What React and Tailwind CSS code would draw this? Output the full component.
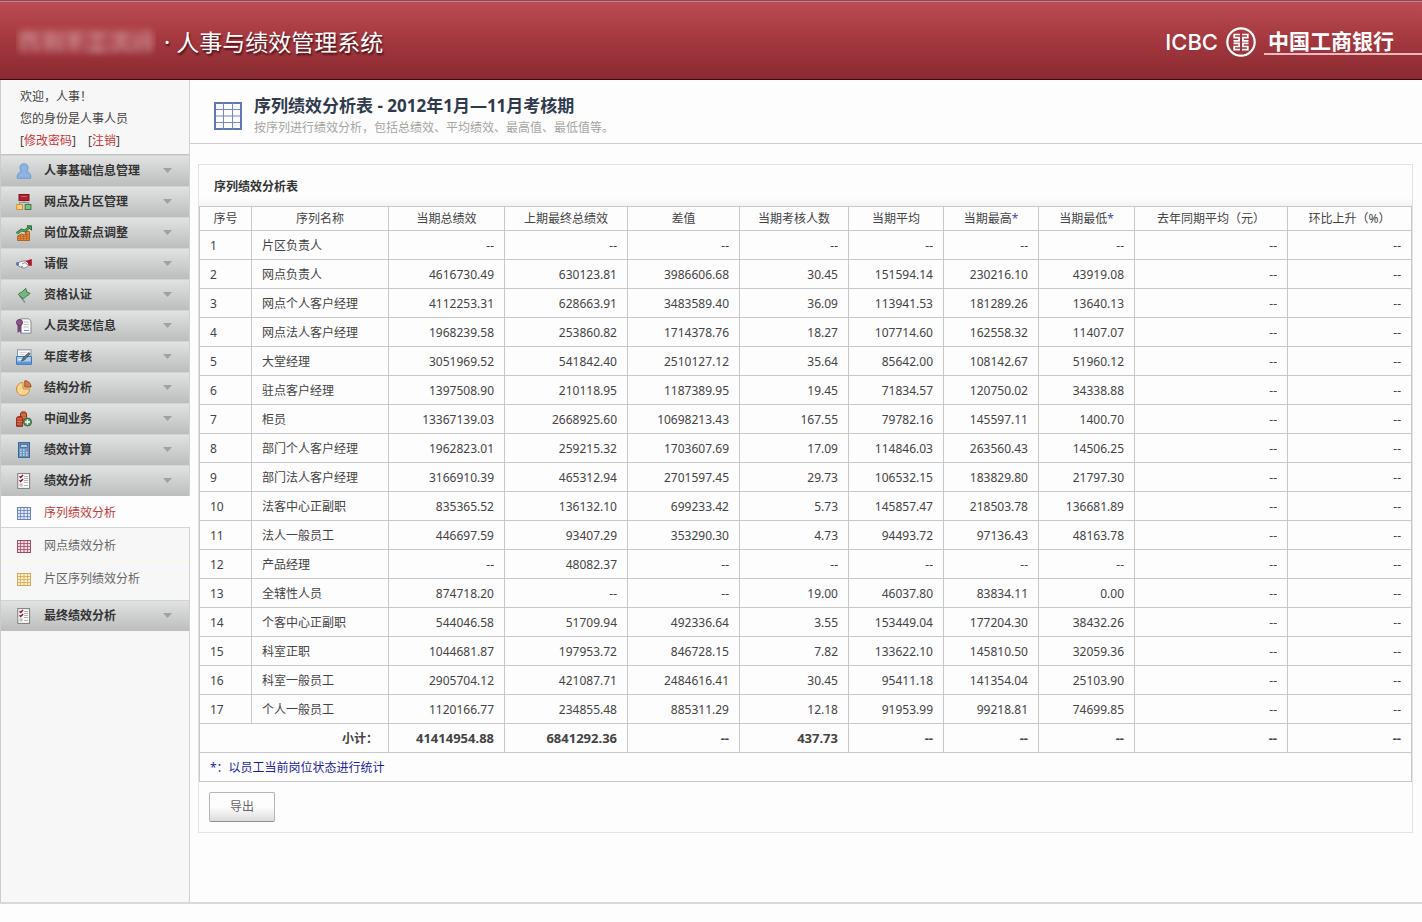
import React from "react";

const svg = { width: 16, height: 16, viewBox: "0 0 16 16", "aria-hidden": true, fill: "none" };

const UserIcon = () => (
  <svg {...svg}>
    <path d="M8 .8c2.400 0 4 1.600 4 3.800 0 1.700-.7 3-1.500 3.900 3 .8 4.300 2.600 4.300 6.700H1.200c0-4.100 1.300-5.900 4.300-6.700C4.700 7.600 4 6.300 4 4.600 4 2.400 5.600.8 8 .8Z" fill="#8fb4e3" stroke="#6d97d0" />
  </svg>
);
const BranchIcon = () => (
  <svg {...svg}>
    <path d="M8 7v2M3.500 11V8.500h9V11" stroke="#8b8b8b" />
    <rect x="3" y=".5" width="10" height="6" fill="#b0202c" stroke="#7c1620" />
    <path d="M5 2.500h6" stroke="#d25a62" />
    <rect x=".8" y="10.500" width="5.700" height="5" fill="#f5cf7b" stroke="#d09338" />
    <rect x="9.200" y="10.500" width="5.700" height="5" fill="#7fc08a" stroke="#3e7a4a" />
  </svg>
);
const GrowthIcon = () => (
  <svg {...svg}>
    <path d="M1.500 15.500V11l4-2 4 1V6.500h4v9z" fill="#e58a3c" stroke="#b8621f" />
    <path d="M2 13.500h11M2 11.500h11M9.500 9.500h4M4.500 10v5.500M7.500 10v5.500M10.500 7v8.500" stroke="#b8621f" strokeWidth=".7" />
    <path d="M.8 8.500 5.500 5 9 6l4-3.500" stroke="#2f6b3b" strokeWidth="2.800" />
    <path d="M.8 8.500 5.500 5 9 6l4-3.500" stroke="#5fa96c" strokeWidth="1.100" />
    <path d="M11 .8h4.500v4.500z" fill="#4f9a5d" stroke="#2f6b3b" />
  </svg>
);
const HandshakeIcon = () => (
  <svg {...svg}>
    <path d="M.2 6.500 3 6v4.500L.2 9z" fill="#3d6fc0" />
    <path d="M2.500 6.500 6 5.200l4-.4 3 1.200-.5 4L9 12H6.500L2.500 10z" fill="#f4f4f4" stroke="#777" strokeWidth=".8" />
    <path d="m6 8 3-1.500 3.500 3M5 10l2 1" stroke="#777" strokeWidth=".8" />
    <path d="M9.500 5 15.800 3v7l-3-.5-1-2.500z" fill="#a8182a" />
  </svg>
);
const FlagIcon = () => (
  <svg {...svg}>
    <path d="M3.500 8.500 9 15.500" stroke="#8a8a8a" strokeWidth="1.400" />
    <path d="M2.300 7.500c1-2 3.200-1.700 4.400-3.200C7.900 3 8.700 2.500 9.700 1.300l1 3.700 3.300 1.300c-1 2-2.700 1.900-3.800 3.100-1 1.300-2 1.400-3.200 2.400z" fill="#74b583" stroke="#3b7749" />
  </svg>
);
const AwardIcon = () => (
  <svg {...svg}>
    <path d="M4.500.8H13l2 2.200v12.200H4.500z" fill="#fbfbfb" stroke="#8b8b8b" />
    <path d="M7.500 4h5M7.500 6.500h5M7.500 9h5" stroke="#bdbdbd" />
    <path d="M8 12.500h5" stroke="#6f96d6" />
    <path d="M1.500 7h4v8l-2-1.500-2 1.500z" fill="#744776" />
    <circle cx="3.500" cy="4.500" r="3" fill="#8c558e" stroke="#5d3660" />
  </svg>
);
const ReviewIcon = () => (
  <svg {...svg}>
    <rect x="1.500" y=".8" width="13.500" height="12" fill="#f5f7f8" stroke="#8d979f" />
    <path d="M3.500 3.500h7M3.500 5.500h5" stroke="#cdd3d8" />
    <path d="M.6 7.500h14.800v7.800H.6z" fill="#a9d0f4" stroke="#3a70ad" />
    <path d="M1 12.500h14v2.500H1z" fill="#5b97d6" />
    <path d="M2.500 10.500h4" stroke="#fff" />
    <path d="m5.500 12 1.200-3L13 3.500 14.300 5 8.500 11z" fill="#66737c" stroke="#3d484f" strokeWidth=".7" />
  </svg>
);
const PieIcon = () => (
  <svg {...svg}>
    <path d="M7 2.500V9h6.500A6.500 6.500 0 1 1 7 2.500Z" fill="#fbd38b" stroke="#d08a35" />
    <path d="M7 9.300 3 14" stroke="#f9e5bd" />
    <path d="M8.800.8A6 6 0 0 1 15 7H8.800z" fill="#d97c35" stroke="#a44f18" />
  </svg>
);
const CoinsIcon = () => (
  <svg {...svg}>
    <path d="M4.500 2.500C5 .3 10 .3 10.500 2.500V10h-6z" fill="#c95b32" stroke="#8b2f17" />
    <path d="M.6 7c.5-2 5.500-2 6 0v8.300h-6z" fill="#b8442b" stroke="#8b2318" />
    <path d="M.8 8h5.600M.8 10.500h5.600M.8 13h5.600M5 4h5M6.500 6.500h4" stroke="#e0875b" strokeWidth=".8" />
    <circle cx="11.500" cy="11" r="4" fill="#5d9b67" stroke="#30643b" />
    <path d="M11.500 8.500v5M9 11h5" stroke="#fff" strokeWidth="1.500" />
  </svg>
);
const CalculatorIcon = () => (
  <svg {...svg}>
    <rect x="2.500" y=".6" width="11" height="14.800" fill="#6795c4" stroke="#3b638e" />
    <rect x="4.500" y="2.500" width="7" height="3" fill="#b5cfe2" stroke="#3f5d7a" strokeWidth=".7" />
    <path d="M4 8h8M4 10.500h8M4 13h8" stroke="#c3d8ea" strokeWidth="1.300" strokeDasharray="1.600 1.400" />
    <path d="M10.500 8h1.500" stroke="#c33a4a" strokeWidth="1.300" />
  </svg>
);
const ChecklistIcon = () => (
  <svg {...svg}>
    <rect x="1.800" y=".6" width="11.800" height="14.800" fill="#fbfbfb" stroke="#7b7b7b" />
    <path d="m3.500 3.200 1.200 1.300L7 2M3.500 7.200l1.200 1.300L7 6" stroke="#96152b" strokeWidth="1.500" />
    <path d="M8 3.500h4M8 5.500h4M8 7.500h4M8 9.500h4M8 12.500h4" stroke="#aaa" strokeWidth=".9" />
    <rect x="4" y="11" width="2" height="2" stroke="#999" strokeWidth=".7" />
  </svg>
);
const GridIcon = ({ stroke, fill }) => (
  <svg {...svg}>
    <rect x="1.500" y="2.500" width="13" height="12" fill={fill} stroke={stroke} />
    <path d="M1.500 5.500h13M1.500 8.500h13M1.500 11.500h13M4.500 2.500v12M8 2.500v12M11.500 2.500v12" stroke={stroke} strokeWidth=".8" />
  </svg>
);

const MENU = [
  ["人事基础信息管理", UserIcon],
  ["网点及片区管理", BranchIcon],
  ["岗位及薪点调整", GrowthIcon],
  ["请假", HandshakeIcon],
  ["资格认证", FlagIcon],
  ["人员奖惩信息", AwardIcon],
  ["年度考核", ReviewIcon],
  ["结构分析", PieIcon],
  ["中间业务", CoinsIcon],
  ["绩效计算", CalculatorIcon],
  ["绩效分析", ChecklistIcon],
];

const COLUMNS = [
  ["序号", 52],
  ["序列名称", 137],
  ["当期总绩效", 116],
  ["上期最终总绩效", 123],
  ["差值", 112],
  ["当期考核人数", 109],
  ["当期平均", 95],
  ["当期最高", 95, true],
  ["当期最低", 96, true],
  ["去年同期平均（元）", 153],
  ["环比上升（%）", 124],
];

const ROWS = [
  ["片区负责人", "--", "--", "--", "--", "--", "--", "--"],
  ["网点负责人", "4616730.49", "630123.81", "3986606.68", "30.45", "151594.14", "230216.10", "43919.08"],
  ["网点个人客户经理", "4112253.31", "628663.91", "3483589.40", "36.09", "113941.53", "181289.26", "13640.13"],
  ["网点法人客户经理", "1968239.58", "253860.82", "1714378.76", "18.27", "107714.60", "162558.32", "11407.07"],
  ["大堂经理", "3051969.52", "541842.40", "2510127.12", "35.64", "85642.00", "108142.67", "51960.12"],
  ["驻点客户经理", "1397508.90", "210118.95", "1187389.95", "19.45", "71834.57", "120750.02", "34338.88"],
  ["柜员", "13367139.03", "2668925.60", "10698213.43", "167.55", "79782.16", "145597.11", "1400.70"],
  ["部门个人客户经理", "1962823.01", "259215.32", "1703607.69", "17.09", "114846.03", "263560.43", "14506.25"],
  ["部门法人客户经理", "3166910.39", "465312.94", "2701597.45", "29.73", "106532.15", "183829.80", "21797.30"],
  ["法客中心正副职", "835365.52", "136132.10", "699233.42", "5.73", "145857.47", "218503.78", "136681.89"],
  ["法人一般员工", "446697.59", "93407.29", "353290.30", "4.73", "94493.72", "97136.43", "48163.78"],
  ["产品经理", "--", "48082.37", "--", "--", "--", "--", "--"],
  ["全辖性人员", "874718.20", "--", "--", "19.00", "46037.80", "83834.11", "0.00"],
  ["个客中心正副职", "544046.58", "51709.94", "492336.64", "3.55", "153449.04", "177204.30", "38432.26"],
  ["科室正职", "1044681.87", "197953.72", "846728.15", "7.82", "133622.10", "145810.50", "32059.36"],
  ["科室一般员工", "2905704.12", "421087.71", "2484616.41", "30.45", "95411.18", "141354.04", "25103.90"],
  ["个人一般员工", "1120166.77", "234855.48", "885311.29", "12.18", "91953.99", "99218.81", "74699.85"],
];

const TOTALS = ["41414954.88", "6841292.36", "--", "437.73", "--", "--", "--", "--", "--"];

function Masthead() {
  return (
    <header className="flex h-20 items-center justify-between border-b border-t border-b-[#3a0a10] border-t-[#8f4a50] bg-linear-to-b from-[#bb4c53] via-[#a4383f] to-[#892a31] pl-4 pt-1 text-white shadow-[inset_0_1px_0_#cf8086]">
      <div className="flex items-center">
        <svg width="140" height="36" viewBox="0 0 140 36" aria-hidden="true">
          <defs>
            <filter id="soft" x="-10%" y="-30%" width="120%" height="160%">
              <feGaussianBlur stdDeviation="3.500" />
            </filter>
          </defs>
          <rect x="2" y="5" width="134" height="24" fill="#c98287" opacity=".35" filter="url(#soft)" />
          <g stroke="#dda9ad" strokeWidth="3" fill="none" opacity=".6" filter="url(#soft)">
            <path d="M4 12h18M7 12v14M12 8l9 18M28 12h12M28 19h12M34 8v19M44 9v18M51 11h15M52 18h13M58 11v16M74 11h15M81 11v15M72 26h19M97 13h17M105 8v11l-8 8M105 19l9 8M121 12v15M127 11h10M125 18h13M133 18v9" />
          </g>
        </svg>
        <h1 className="pl-2 text-[23px] leading-8 [text-shadow:1px_2px_2px_#4a0d13]">· 人事与绩效管理系统</h1>
      </div>
      <div className="flex items-center">
        <span className="font-[Inter] text-[22px] font-medium leading-8">ICBC</span>
        <svg className="ml-2" width="30" height="30" viewBox="0 0 30 30" fill="none" stroke="#fff" aria-hidden="true">
          <circle cx="15" cy="15" r="13.700" strokeWidth="2.200" />
          <path strokeWidth="1.700" d="M14 7.500H8.200v3.100h4.900v3.200H7.500M16 7.500h5.800v3.100h-4.900v3.200h5.600M7.500 16.400h5.600v3.100H8.200v3.200H14M22.500 16.400h-5.600v3.100h4.900v3.200H16" />
        </svg>
        <div className="ml-2 border-b-2 border-[#efb9bd] pl-1 pr-7 text-[21px] font-bold leading-6">
          中国工商银行
        </div>
      </div>
    </header>
  );
}

function MenuButton({ label, Icon, open }) {
  return (
    <button
      type="button"
      aria-expanded={open}
      className="flex h-[31px] w-full items-center border-r border-[#d0d0d0] bg-linear-to-b from-[#e2e4e4] to-[#bcbebe] pl-[15px] pr-[17px] text-left font-bold text-[#333] shadow-[inset_0_1px_0_#d2d3d3]"
    >
      <Icon />
      <span className="ml-3 flex-1">{label}</span>
      <svg width="9" height="5" viewBox="0 0 9 5" aria-hidden="true">
        <path d="M0 0h9L4.500 5z" fill="#9fa2a2" />
      </svg>
    </button>
  );
}

function Sidebar() {
  return (
    <aside className="flex w-[190px] shrink-0 flex-col border-l border-[#ccc] bg-[#f7f7f7]">
      <div className="border-b border-r border-[#c4c4c4] border-r-[#d0d0d0] pb-[2px] pl-[19px] pt-[6px] leading-[22px] text-[#444]">
        <p>欢迎，人事！</p>
        <p>您的身份是人事人员</p>
        <p className="flex gap-3">
          <span>[<a href="#password" className="text-[#c8373b]">修改密码</a>]</span>
          <span>[<a href="#logout" className="text-[#c8373b]">注销</a>]</span>
        </p>
      </div>
      <nav className="flex flex-1 flex-col">
        {MENU.map(([label, Icon]) => (
          <MenuButton key={label} label={label} Icon={Icon} open={label === "绩效分析"} />
        ))}
        <a href="#sequence" aria-current="page" className="flex h-8 items-center border-b border-[#d4d4d4] bg-[#fdfdfd] pl-[15px] pt-[2px] text-[#bf3b3b]">
          <GridIcon stroke="#6a84bd" fill="#dce6f7" />
          <span className="ml-3">序列绩效分析</span>
        </a>
        <a href="#branch" className="flex h-[34px] items-center border-b border-r border-[#d0d0d0] border-b-[#fbf8e0] pl-[15px] pt-[2px] text-[#666]">
          <GridIcon stroke="#a04d6c" fill="#f3dbe3" />
          <span className="ml-3">网点绩效分析</span>
        </a>
        <a href="#area" className="flex h-[38px] items-center border-r border-[#d0d0d0] pb-1 pl-[15px] text-[#666]">
          <GridIcon stroke="#dba654" fill="#fcefd2" />
          <span className="ml-3">片区序列绩效分析</span>
        </a>
        <MenuButton label="最终绩效分析" Icon={ChecklistIcon} open={false} />
        <div className="flex-1 border-r border-[#d0d0d0]" />
      </nav>
    </aside>
  );
}

function ReportTable() {
  const cell = "border border-[#c8c8c8] px-[10px] pt-[2px]";
  return (
    <table className="w-full table-fixed border-collapse text-[#444]">
      <colgroup>
        {COLUMNS.map(([name, width]) => (
          <col key={name} style={{ width }} />
        ))}
      </colgroup>
      <thead>
        <tr className="h-6">
          {COLUMNS.map(([name, , starred]) => (
            <th key={name} scope="col" className="whitespace-nowrap border border-[#c8c8c8] text-center font-normal">
              {name}
              {starred && <span className="text-[#4a4a9c]">*</span>}
            </th>
          ))}
        </tr>
      </thead>
      <tbody>
        {ROWS.map(([name, ...values], i) => (
          <tr key={name} className="h-[29px]">
            <td className={cell}>{i + 1}</td>
            <td className={cell}>{name}</td>
            {[...values, "--", "--"].map((value, j) => (
              <td key={j} className="border border-[#c8c8c8] px-[10px] pt-[2px] text-right">{value}</td>
            ))}
          </tr>
        ))}
        <tr className="h-[29px] font-bold">
          <td colSpan={2} className="border border-[#c8c8c8] px-[10px] pt-[2px] text-right">小计：</td>
          {TOTALS.map((value, j) => (
            <td key={j} className="border border-[#c8c8c8] px-[10px] text-right text-[13px]">{value}</td>
          ))}
        </tr>
        <tr className="h-[29px]">
          <td colSpan={11} className="border border-[#c8c8c8] px-[10px] pt-[2px] text-[#1c1ca0]">*：以员工当前岗位状态进行统计</td>
        </tr>
      </tbody>
    </table>
  );
}

export default function App() {
  return (
    <div className="flex min-h-screen flex-col bg-[#fdfdfd] pb-[18px] font-['Noto_Sans','Noto_Sans_CJK_SC',sans-serif] text-[12px] leading-4">
      <Masthead />
      <div className="flex flex-1 border-b-2 border-[#d9d9d9]">
        <Sidebar />
        <main className="min-w-0 flex-1">
          <div className="flex h-16 items-center gap-3 border-b border-[#ccc] pl-6 pt-2">
            <svg width="28" height="28" viewBox="0 0 28 28" fill="#fcfcff" stroke="#7388bd" aria-hidden="true">
              <rect x="1" y="1" width="26" height="26" strokeWidth="2" stroke="#6179b3" />
              <path d="M1 7.500h26M1 14h26M1 20.500h26M9.500 1v26M18.500 1v26" />
            </svg>
            <div>
              <h2 className="text-[17px] font-bold leading-6 text-[#2f3b4c]">序列绩效分析表 - 2012年1月—11月考核期</h2>
              <p className="leading-5 text-[#a5a5a0]">按序列进行绩效分析，包括总绩效、平均绩效、最高值、最低值等。</p>
            </div>
          </div>
          <section className="ml-2 mr-[9px] mt-5 border border-[#e3e3e3]">
            <h3 className="flex h-[41px] items-center bg-linear-to-b from-[#fdfdfd] from-80% to-[#f3f3f3] pl-[15px] pt-[2px] font-bold text-[#333]">序列绩效分析表</h3>
            <ReportTable />
            <div className="p-[10px]">
              <button type="button" className="h-[30px] w-[66px] rounded-[2px] border border-[#b5b5b5] border-b-[#8f8f8f] bg-linear-to-b from-[#fdfdfd] from-50% to-[#dcdcdc] text-[#666]">
                导出
              </button>
            </div>
          </section>
        </main>
      </div>
    </div>
  );
}
